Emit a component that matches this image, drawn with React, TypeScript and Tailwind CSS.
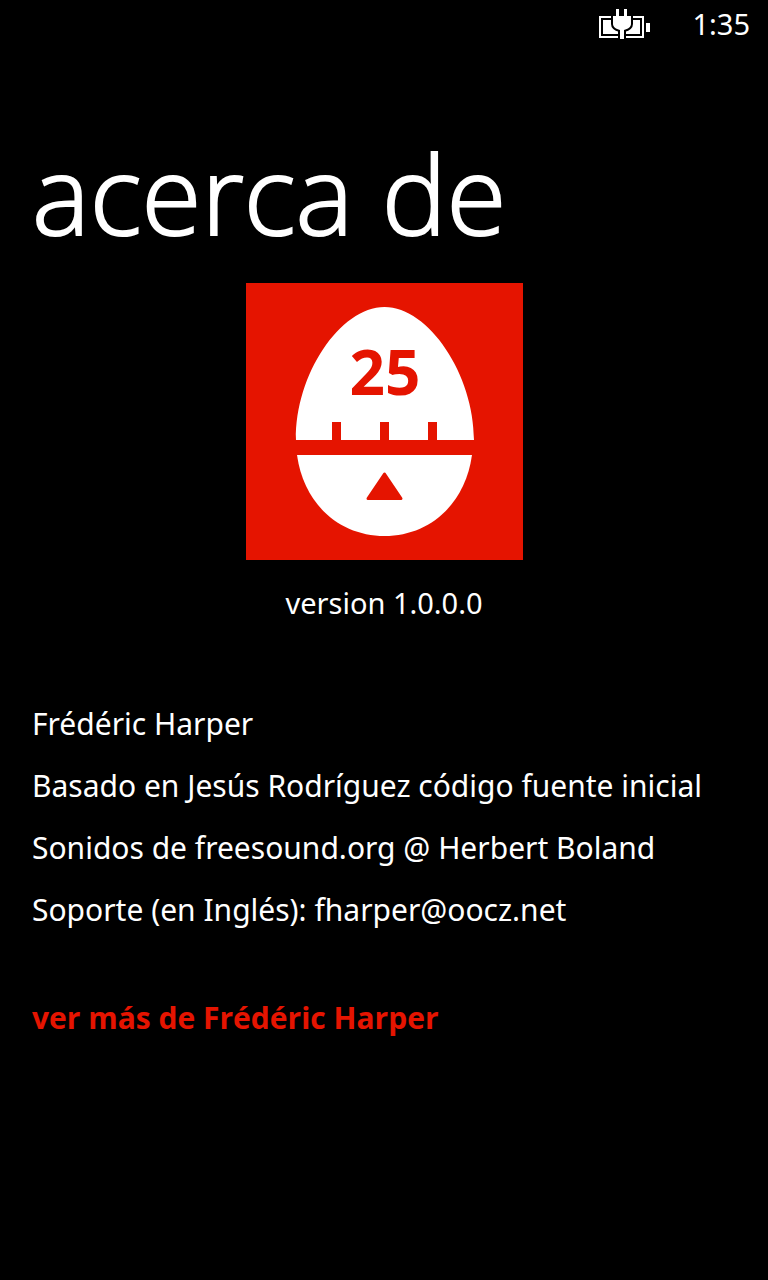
function BatteryIcon() {
  return (
    <svg width="52" height="30" viewBox="0 0 52 30" role="img" aria-label="Cargando batería">
      <rect x="2" y="8" width="43" height="20" fill="#000" stroke="#fff" strokeWidth="2" />
      <rect x="5" y="11" width="37" height="14" fill="#fff" />
      <path d="M15 7H33v8c0 3-3 5-7 6v9h-4v-9c-4-1-7-3-7-6z" fill="#000" stroke="#000" strokeWidth="4" />
      <path d="M18 0h3v7h5V0h3v7h4v8c0 3-3 5-7 6v9h-4v-9c-4-1-7-3-7-6V7h3z" fill="#fff" />
      <rect x="48" y="14" width="4" height="9" fill="#fff" />
    </svg>
  );
}

function EggTimer() {
  return (
    <svg className="size-[277px]" viewBox="0 0 277 277" role="img" aria-label="Temporizador de 25 minutos">
      <rect width="277" height="277" fill="#e51400" />
      <path
        d="M50 157C49 92 94 24 138.500 24S228 92 228 157h-37v-18h-9v18h-39v-18h-9v18h-39v-18h-9v18z"
        fill="#fff"
      />
      <path d="M51 172H226C219 222 183 253 138.500 253S58 222 51 172z" fill="#fff" />
      <path d="M138.500 191L155 215.500H122z" fill="#e51400" stroke="#e51400" strokeWidth="3" strokeLinejoin="round" />
      <text
        x="139"
        y="112"
        textAnchor="middle"
        className="fill-[#e51400] font-['Open_Sans','Noto_Sans',sans-serif] text-[62px] font-bold"
      >
        25
      </text>
    </svg>
  );
}

const credits = [
  "Frédéric Harper",
  "Basado en Jesús Rodríguez código fuente inicial",
  "Sonidos de freesound.org @ Herbert Boland",
];

export default function App() {
  return (
    <div className="flex min-h-screen flex-col bg-black font-['Noto_Sans','Open_Sans',sans-serif] text-[30px] leading-[42px] text-white">
      <header className="flex items-center justify-end gap-[42px] px-[18px] pt-[3px]">
        <BatteryIcon />
        <time className="text-[29px]">1:35</time>
      </header>
      <main className="flex flex-col px-8">
        <h1 className="mt-[68px] font-['Open_Sans','Noto_Sans',sans-serif] text-[109px] leading-[160px] font-light [-webkit-text-stroke:2px_white]">
          acerca de
        </h1>
        <div className="mt-[10px] flex flex-col items-center gap-[22px]">
          <EggTimer />
          <p className="text-[29px]">version 1.0.0.0</p>
        </div>
        <div className="mt-[79px] flex flex-col gap-5">
          {credits.map((line) => (
            <p key={line}>{line}</p>
          ))}
          <p>
            Soporte (en Inglés): <a href="mailto:fharper@oocz.net">fharper@oocz.net</a>
          </p>
        </div>
        <a
          href="#mas"
          className="mt-[66px] self-start font-['Open_Sans','Noto_Sans',sans-serif] font-bold text-[#e51400]"
        >
          ver más de Frédéric Harper
        </a>
      </main>
    </div>
  );
}
